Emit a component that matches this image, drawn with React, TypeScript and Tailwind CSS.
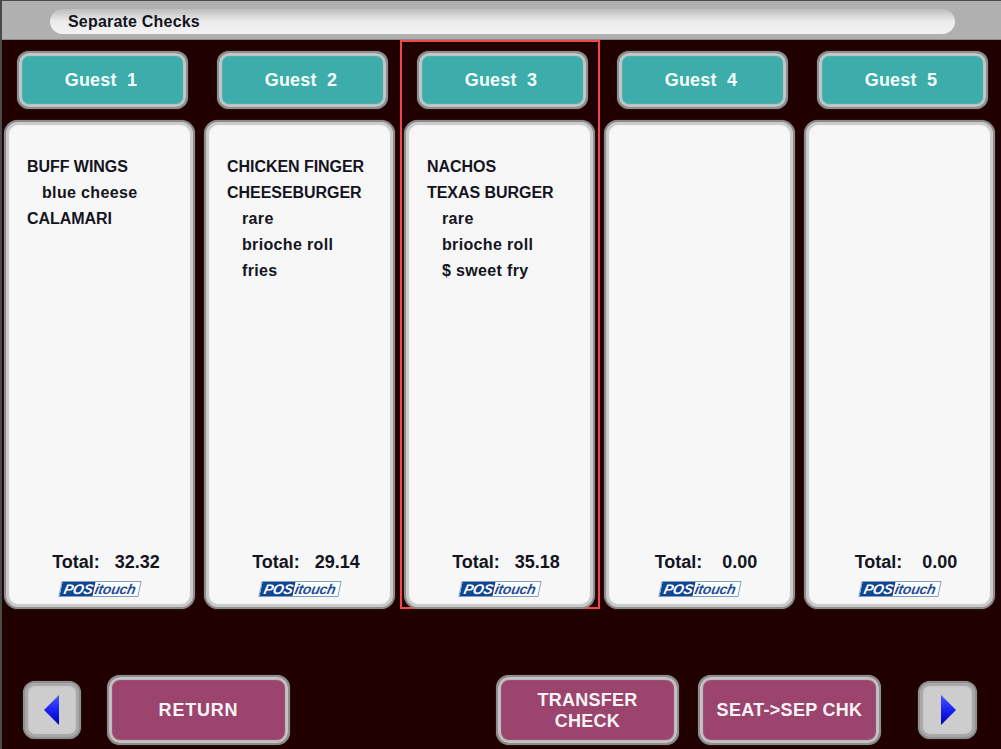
const guests = [
  { name: "Guest 1", total: "32.32", items: [["BUFF WINGS", 0], ["blue cheese", 1], ["CALAMARI", 0]] },
  { name: "Guest 2", total: "29.14", items: [["CHICKEN FINGER", 0], ["CHEESEBURGER", 0], ["rare", 1], ["brioche roll", 1], ["fries", 1]] },
  { name: "Guest 3", total: "35.18", selected: true, items: [["NACHOS", 0], ["TEXAS BURGER", 0], ["rare", 1], ["brioche roll", 1], ["$ sweet fry", 1]] },
  { name: "Guest 4", total: " 0.00", items: [] },
  { name: "Guest 5", total: " 0.00", items: [] },
] as { name: string; total: string; selected?: boolean; items: [string, number][] }[];

function Logo() {
  return (
    <div className="flex h-[16px] w-[80px] -skew-x-12 items-stretch overflow-hidden border border-[#7f9fc6] bg-white font-['Liberation_Sans',sans-serif] text-[14px] font-bold italic leading-[14px] tracking-[-0.2px]">
      <span className="bg-[#0f4490] pl-[3px] pr-[1px] text-white">POS</span>
      <span className="pl-[1px] text-[#1f4f93]">itouch</span>
    </div>
  );
}

function PurpleButton({ children, className }: { children: React.ReactNode; className?: string }) {
  return (
    <div className={"flex h-[70px] w-[183px] items-center justify-center rounded-[13px] border-2 border-[#8e8e8e] bg-[#9b446d] pt-[2px] text-center font-['Liberation_Sans',sans-serif] text-[18px] font-bold leading-[21px] text-[#f8f4f6] shadow-[inset_0_0_1px_3px_#c4c4c4,0_0_1px_#777777] " + (className ?? "")}>
      {children}
    </div>
  );
}

function ArrowButton({ dir, className }: { dir: "left" | "right"; className?: string }) {
  return (
    <div className={"flex h-[58px] items-center justify-center rounded-[12px] border-2 border-[#909090] bg-[#cdcdcd] shadow-[inset_0_0_1px_3px_#a8a8a8,0_0_1px_#777777] " + (className ?? "")}>
      <svg width="16" height="30" viewBox="0 0 16 30">
        <defs>
          <linearGradient id={"arrow-" + dir} x1="0" y1="0" x2="0" y2="1">
            <stop offset="0" stopColor="#4a58ff" />
            <stop offset="0.5" stopColor="#1a22f0" />
            <stop offset="1" stopColor="#0000b8" />
          </linearGradient>
        </defs>
        <path d={dir === "left" ? "M15 0 L15 30 L0 15 Z" : "M1 0 L1 30 L16 15 Z"} fill={"url(#arrow-" + dir + ")"} />
      </svg>
    </div>
  );
}

export default function App() {
  return (
    <div className="flex h-[749px] w-[1001px] flex-col overflow-hidden border-l-2 border-t border-[#4a4a4a] bg-[#200000] font-['Liberation_Sans',sans-serif]">
      <div className="flex h-[39px] shrink-0 items-start border-b border-[#8a8a8a] bg-[#b0b0b0] pl-[48px] pt-[8px]">
        <div className="flex h-[25px] w-[905px] items-center rounded-full bg-gradient-to-b from-[#bdbdbd] via-[#ececec] to-[#f2f2f2] pl-[18px] pt-[1px] text-[16px] font-bold tracking-[0.2px] text-[#14141e]">
          Separate Checks
        </div>
      </div>
      <div className="-ml-[2px] flex h-[569px] shrink-0">
        {guests.map((g) => (
          <div
            key={g.name}
            className={"flex h-[569px] w-[200px] shrink-0 flex-col border-2 " + (g.selected ? "border-[#f04848]" : "border-transparent")}
          >
            <div className="ml-[15px] mt-[9px] flex h-[58px] w-[171px] shrink-0 items-center justify-center whitespace-pre rounded-[12px] border-2 border-[#8e8e8e] bg-[#3dadab] pr-[3px] text-[18px] font-bold tracking-[0.2px] text-[#f6fbfb] shadow-[inset_0_0_1px_3px_#c6c6c6,0_0_1px_#888888]">
              {g.name.replace(" ", "  ")}
            </div>
            <div className="ml-[2px] mt-[11px] flex h-[489px] w-[191px] shrink-0 flex-col rounded-[14px] border-2 border-[#8c8c8c] bg-[#f7f7f7] pl-[21px] shadow-[inset_0_0_1px_3px_#cacaca,0_0_1px_#888888]">
              <div className="mt-[32px] flex flex-col text-[16px] font-bold leading-[26px] tracking-[-0.05px] text-[#14141e]">
                {g.items.map(([t, sub], i) => (
                  <div key={i} className={sub ? "pl-[15px] tracking-[0.35px]" : ""}>{t}</div>
                ))}
              </div>
              <div className="mt-auto w-[158px] whitespace-pre text-center text-[18px] font-bold leading-[20px] text-[#14141e]">
                {"Total:   " + g.total}
              </div>
              <div className="mb-[10px] ml-[33px] mt-[9px] flex">
                <Logo />
              </div>
            </div>
          </div>
        ))}
      </div>
      <div className="flex flex-1 items-center pl-[21px] pt-[61px]">
        <ArrowButton dir="left" className="w-[58px]" />
        <PurpleButton className="ml-[26px] tracking-[0.8px]">RETURN</PurpleButton>
        <PurpleButton className="ml-[206px] tracking-[0.25px]">TRANSFER<br />CHECK</PurpleButton>
        <PurpleButton className="ml-[19px] tracking-[0.3px]">SEAT-&gt;SEP CHK</PurpleButton>
        <ArrowButton dir="right" className="ml-[37px] w-[59px]" />
      </div>
    </div>
  );
}
